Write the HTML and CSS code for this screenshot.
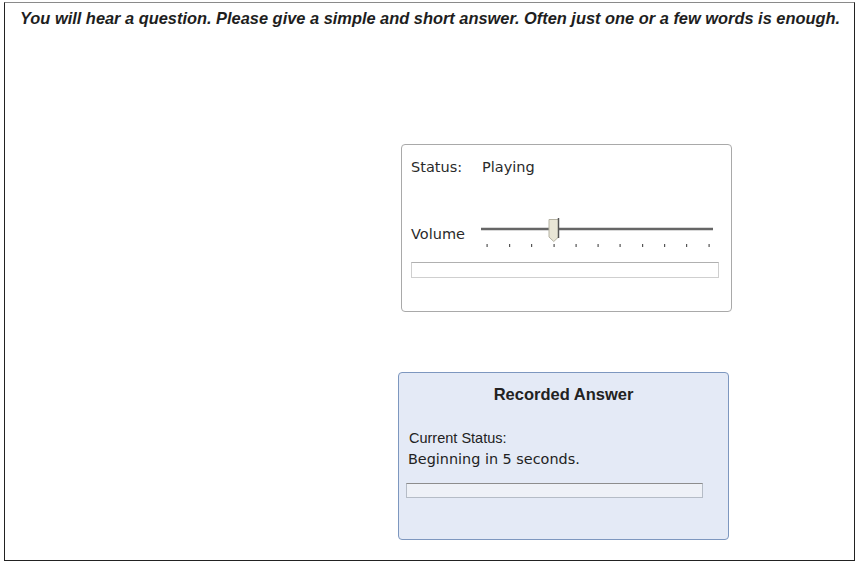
FILE: index.html
```html
<!DOCTYPE html>
<html lang="en">
  <head>
    <meta charset="UTF-8" />
    <title>Listening Task</title>
    <link rel="stylesheet" href="styles.css">
  </head>
  <body>
    <div class="frame">
      <p class="instructions">You will hear a question. Please give a simple and short answer. Often just one or a few words is enough.</p>

      <div class="player">
        <div class="row status-row">
          <span class="label">Status:</span>
          <span class="value">Playing</span>
        </div>
        <div class="row volume-row">
          <span class="label">Volume</span>
          <svg class="slider" width="240" height="34" viewBox="0 0 240 34">
            <line x1="3" y1="12" x2="235" y2="12" stroke="#666" stroke-width="2.6" />
            <g fill="#555">
              <rect x="8.5" y="27" width="1.2" height="3" />
              <rect x="31" y="27" width="1.2" height="3" />
              <rect x="53" y="27" width="1.2" height="3" />
              <rect x="75.5" y="27" width="1.2" height="3" />
              <rect x="97.5" y="27" width="1.2" height="3" />
              <rect x="119.5" y="27" width="1.2" height="3" />
              <rect x="141.5" y="27" width="1.2" height="3" />
              <rect x="164" y="27" width="1.2" height="3" />
              <rect x="186" y="27" width="1.2" height="3" />
              <rect x="208" y="27" width="1.2" height="3" />
              <rect x="230.5" y="27" width="1.2" height="3" />
            </g>
            <path d="M71 2.5 h9.5 v17.5 l-4.75 4.5 l-4.75 -4.5 z" fill="#e9e6d6" stroke="#b5b2a3" stroke-width="1" />
            <line x1="80.5" y1="1" x2="80.5" y2="21" stroke="#555" stroke-width="1.5" />
          </svg>
        </div>
        <div class="progress"></div>
      </div>

      <div class="recorder">
        <h2 class="recorder-title">Recorded Answer</h2>
        <div class="current">Current Status:</div>
        <div class="countdown">Beginning in 5 seconds.</div>
        <div class="progress rec-progress"></div>
      </div>
    </div>
  </body>
</html>
```

FILE: styles.css
```css
body {
  margin: 0;
  background: #ffffff;
  font-family: "DejaVu Sans", Verdana, sans-serif;
  color: #222;
}
.frame {
  box-sizing: border-box;
  margin: 2px 0 0 4px;
  width: 851px;
  height: 559px;
  border: 1px solid #222;
  border-top-color: #8a8a8a;
  padding: 6px 0 0 15px;
}
.instructions {
  margin: 0;
  font-family: "Liberation Sans", Arial, sans-serif;
  font-weight: bold;
  font-style: italic;
  font-size: 16.4px;
  line-height: 18px;
  color: #1e1e1e;
}
.player {
  box-sizing: border-box;
  width: 331px;
  height: 168px;
  margin: 117px 0 0 381px;
  border: 1px solid #a9a9a9;
  border-radius: 4px;
  padding: 13px 0 0 9px;
}
.row {
  display: flex;
  align-items: flex-start;
  font-size: 14.5px;
  line-height: 18px;
  color: #2a2a2a;
}
.status-row .label {
  width: 71px;
}
.volume-row {
  margin-top: 46px;
}
.volume-row .label {
  width: 67px;
  padding-top: 3px;
}
.slider {
  display: block;
  margin-top: -5px;
}
.progress {
  box-sizing: border-box;
  width: 308px;
  height: 16px;
  margin-top: 11px;
  border: 1px solid #cfcfcf;
  border-top-color: #b0b0b0;
  background: #ffffff;
}
.recorder {
  box-sizing: border-box;
  width: 331px;
  height: 168px;
  margin: 60px 0 0 378px;
  border: 1px solid #7d97bf;
  border-radius: 4px;
  background: #e4eaf6;
  padding: 12px 0 0 10px;
}
.recorder-title {
  margin: 0 0 0 -10px;
  text-align: center;
  font-family: "Liberation Sans", Arial, sans-serif;
  font-size: 16.5px;
  font-weight: bold;
  line-height: 18px;
  color: #222;
}
.current {
  margin-top: 25px;
  font-family: "Liberation Sans", Arial, sans-serif;
  font-size: 14.5px;
  line-height: 20px;
  color: #222;
}
.countdown {
  margin-left: -1px;
  font-size: 14.4px;
  line-height: 22px;
  color: #222;
}
.rec-progress {
  width: 297px;
  height: 15px;
  margin: 13px 0 0 -3px;
  border-color: #b5bcc6;
  border-top-color: #8d8d8d;
  background: #eef1f7;
}
```
